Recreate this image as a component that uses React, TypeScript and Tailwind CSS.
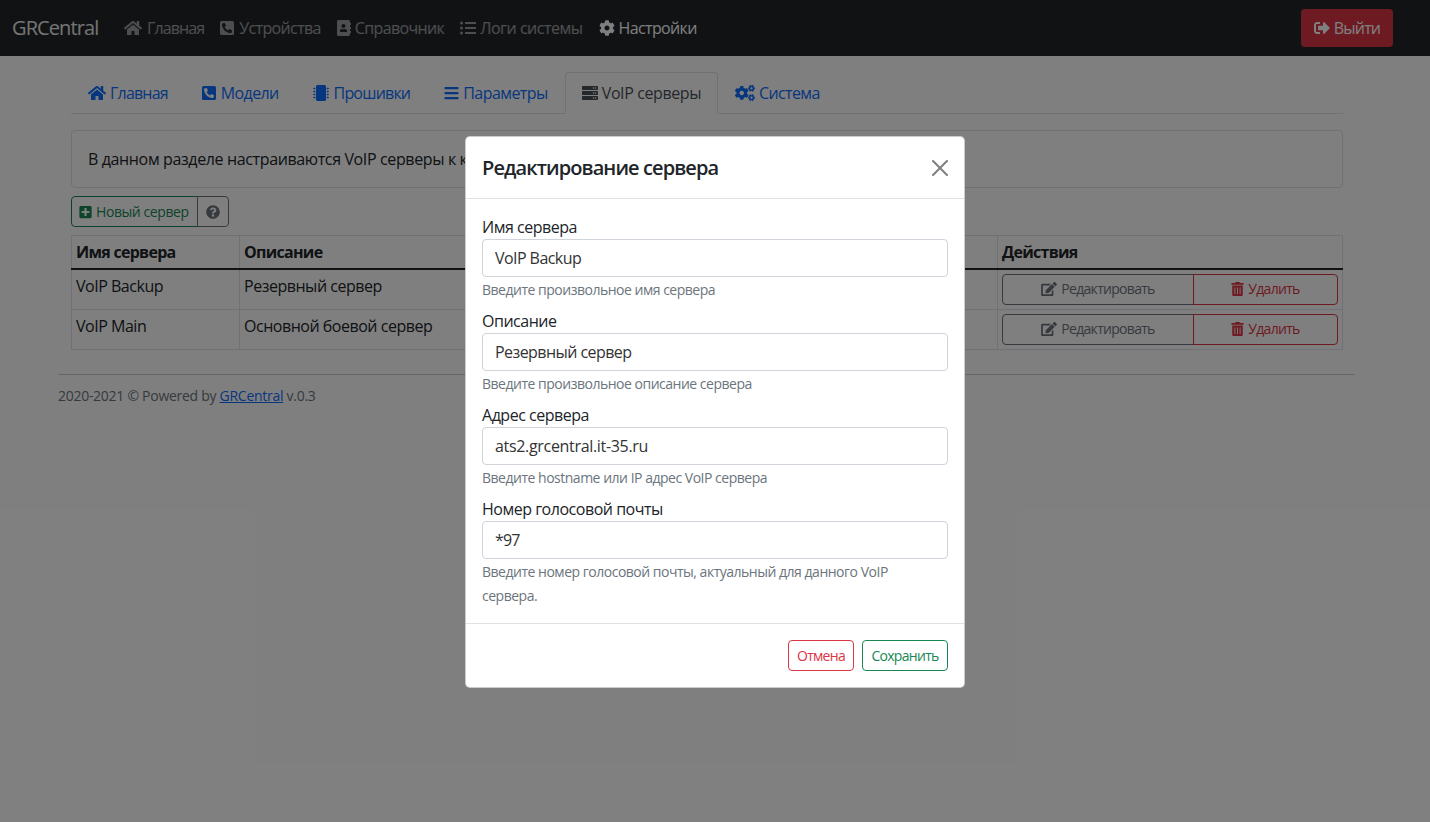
import type { ReactNode } from "react";
import {
  FaHome,
  FaPhoneSquareAlt,
  FaAddressBook,
  FaListUl,
  FaCog,
  FaCogs,
  FaSignOutAlt,
  FaMicrochip,
  FaBars,
  FaServer,
  FaPlusSquare,
  FaQuestionCircle,
  FaEdit,
  FaTrashAlt,
} from "react-icons/fa";

const servers = [
  { name: "VoIP Backup", description: "Резервный сервер" },
  { name: "VoIP Main", description: "Основной боевой сервер" },
];

const fields = [
  {
    label: "Имя сервера",
    value: "VoIP Backup",
    help: "Введите произвольное имя сервера",
    valueClass: "tracking-[-0.035em]",
  },
  {
    label: "Описание",
    value: "Резервный сервер",
    help: "Введите произвольное описание сервера",
    valueClass: "tracking-[-0.035em]",
  },
  {
    label: "Адрес сервера",
    value: "ats2.grcentral.it-35.ru",
    help: "Введите hostname или IP адрес VoIP сервера",
    valueClass: "tracking-[-0.02em]",
  },
  {
    label: "Номер голосовой почты",
    value: "*97",
    help: "Введите номер голосовой почты, актуальный для данного VoIP сервера.",
    valueClass: "tracking-[-0.05em]",
  },
];

function TopLink({
  icon,
  label,
  active,
  className = "",
}: {
  icon: ReactNode;
  label: string;
  active?: boolean;
  className?: string;
}) {
  return (
    <a className={`flex items-center px-2 py-2 ${active ? "text-white" : "text-white/55"} ${className}`}>
      {icon}
      {label}
    </a>
  );
}

function Tab({
  icon,
  label,
  active,
  className = "",
}: {
  icon: ReactNode;
  label: string;
  active?: boolean;
  className?: string;
}) {
  return (
    <a
      className={`-mb-px flex h-[42px] items-center rounded-t border px-4 ${
        active
          ? "border-[#dee2e6] border-b-white bg-white text-[#495057]"
          : "border-transparent text-[#0d6efd]"
      } ${className}`}
    >
      {icon}
      {label}
    </a>
  );
}

export default function App() {
  return (
    <div className="relative h-[822px] w-[1430px] overflow-hidden bg-white font-['Open_Sans','Liberation_Sans',sans-serif] text-base tracking-[-0.03em] text-[#212529]">
      {/* Navbar */}
      <nav className="flex h-14 items-center bg-[#212529] pr-[37px] pl-3 tracking-[-0.04em]">
        <a className="mr-4 w-[88px] text-xl tracking-[-0.045em] whitespace-nowrap text-white/90">GRCentral</a>
        <TopLink
          icon={<FaHome className="h-4 w-[18px]" />}
          label="Главная"
          className="gap-[5px] tracking-[-0.055em]"
        />
        <TopLink icon={<FaPhoneSquareAlt className="h-4 w-[14px]" />} label="Устройства" className="gap-[5px]" />
        <TopLink icon={<FaAddressBook className="h-4 w-[14px]" />} label="Справочник" className="gap-[4px]" />
        <TopLink
          icon={<FaListUl className="h-4 w-4" />}
          label="Логи системы"
          className="gap-[4px] tracking-[-0.03em]"
        />
        <TopLink icon={<FaCog className="h-4 w-4" />} label="Настройки" className="gap-[4px]" active />
        <button className="ml-auto flex h-[38px] w-[92px] items-center justify-center gap-[4px] rounded bg-[#dc3545] tracking-[-0.05em] text-white">
          <FaSignOutAlt className="h-4 w-4" />
          Выйти
        </button>
      </nav>

      <main className="ml-[58px] w-[1297px]">
        <div className="pt-4 pr-[12px] pl-[13px]">
          {/* Tabs */}
          <div className="flex border-b border-[#dee2e6] tracking-[-0.04em]">
            <Tab icon={<FaHome className="h-4 w-[18px]" />} label="Главная" className="gap-[4px] tracking-[-0.05em]" />
            <Tab icon={<FaPhoneSquareAlt className="h-4 w-[14px]" />} label="Модели" className="gap-[5px]" />
            <Tab icon={<FaMicrochip className="h-4 w-4" />} label="Прошивки" className="gap-[5px] tracking-[-0.05em]" />
            <Tab icon={<FaBars className="h-4 w-[15px]" />} label="Параметры" className="gap-[4px] tracking-[-0.035em]" />
            <Tab
              icon={<FaServer className="h-4 w-4" />}
              label="VoIP серверы"
              className="gap-[4px] tracking-[-0.025em]"
              active
            />
            <Tab icon={<FaCogs className="h-4 w-5" />} label="Система" className="gap-[4px]" />
          </div>

          <div className="mt-4 rounded border border-[#dee2e6] bg-[#fefefe] p-4 tracking-[-0.023em]">
            В данном разделе настраиваются VoIP серверы к которым подключаются телефоны.
          </div>

          {/* Toolbar */}
          <div className="mt-2 flex h-[31px] text-sm tracking-[-0.03em]">
            <button className="flex w-[127px] items-center gap-[4px] rounded-l border border-[#198754] pl-[7px] text-[#198754]">
              <FaPlusSquare className="h-[14px] w-[13px]" />
              Новый сервер
            </button>
            <button className="-ml-px flex w-[32px] items-center justify-center rounded-r border border-[#6c757d] text-[#6c757d]">
              <FaQuestionCircle className="h-[14px] w-[14px]" />
            </button>
          </div>

          {/* Servers */}
          <table className="mt-2 w-full table-fixed border-collapse border border-[#dee2e6] tracking-[-0.03em]">
            <colgroup>
              <col className="w-[168px]" />
              <col />
              <col className="w-[345px]" />
            </colgroup>
            <thead>
              <tr className="h-[33px] border-b-2 border-[#212529] text-left tracking-[-0.045em]">
                <th className="border-x border-[#dee2e6] px-1 font-bold">Имя сервера</th>
                <th className="border-x border-[#dee2e6] px-1 font-bold">Описание</th>
                <th className="border-x border-[#dee2e6] px-1 font-bold">Действия</th>
              </tr>
            </thead>
            <tbody>
              {servers.map((server) => (
                <tr key={server.name} className="h-10 border-b border-[#dee2e6] align-top">
                  <td className="border-x border-[#dee2e6] p-1">{server.name}</td>
                  <td className="border-x border-[#dee2e6] p-1">{server.description}</td>
                  <td className="border-x border-[#dee2e6] p-1">
                    <div className="flex h-[31px] text-sm tracking-[-0.05em]">
                      <button className="flex w-[192px] items-center justify-center gap-[4px] rounded-l border border-[#6c757d] text-[#6c757d]">
                        <FaEdit className="h-[14px] w-4" />
                        Редактировать
                      </button>
                      <button className="-ml-px flex w-[145px] items-center justify-center gap-[4px] rounded-r border border-[#dc3545] text-[#dc3545]">
                        <FaTrashAlt className="h-[14px] w-[13px]" />
                        Удалить
                      </button>
                    </div>
                  </td>
                </tr>
              ))}
            </tbody>
          </table>
        </div>

        <hr className="mt-6 border-[#cfcfcf]" />
        <footer className="mt-[11px] text-sm tracking-[-0.02em] text-[#6c757d]">
          2020-2021 © Powered by <a className="text-[#0d6efd] underline">GRCentral</a> v.0.3
        </footer>
      </main>

      {/* Backdrop */}
      <div className="absolute inset-0 bg-black/50" />

      {/* Modal */}
      <div className="absolute top-[136px] left-[465px] w-[500px] rounded-[5px] border border-black/20 bg-white">
        <div className="flex h-[62px] items-center justify-between border-b border-[#dee2e6] px-4">
          <h5 className="text-xl font-[550] tracking-[-0.045em]">Редактирование сервера</h5>
          <svg viewBox="0 0 16 16" className="h-4 w-4 text-black/50" fill="currentColor">
            <path d="M.293.293a1 1 0 011.414 0L8 6.586 14.293.293a1 1 0 111.414 1.414L9.414 8l6.293 6.293a1 1 0 01-1.414 1.414L8 9.414l-6.293 6.293a1 1 0 01-1.414-1.414L6.586 8 .293 1.707a1 1 0 010-1.414z" />
          </svg>
        </div>
        <div className="px-4 pt-4">
          {fields.map((field) => (
            <div key={field.label} className="mb-2 last:mb-0">
              <label className="block">{field.label}</label>
              <input
                readOnly
                value={field.value}
                className={`block h-[38px] w-full rounded border border-[#ced4da] px-3 text-[#333] ${field.valueClass}`}
              />
              <p className="max-w-[440px] leading-6">
                <small className="text-sm tracking-[-0.035em] text-[#6c757d]">{field.help}</small>
              </p>
            </div>
          ))}
        </div>
        <div className="mt-4 flex justify-end gap-2 border-t border-[#dee2e6] p-4 text-sm tracking-[-0.05em]">
          <button className="h-[31px] w-[66px] rounded border border-[#dc3545] text-[#dc3545]">Отмена</button>
          <button className="h-[31px] w-[86px] rounded border border-[#198754] text-[#198754]">Сохранить</button>
        </div>
      </div>
    </div>
  );
}
